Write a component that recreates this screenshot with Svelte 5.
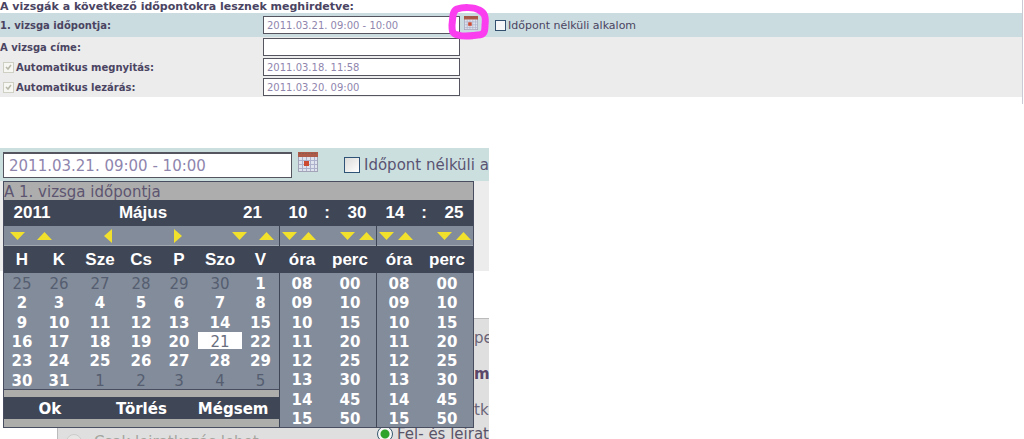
<script>
  const leading = [25, 26, 27, 28, 29, 30];
  const days = [
    ...leading.map((n) => ({ n, out: true })),
    ...Array.from({ length: 31 }, (_, i) => ({ n: i + 1, out: false })),
    ...[1, 2, 3, 4, 5].map((n) => ({ n, out: true })),
  ];
  const weeks = Array.from({ length: 6 }, (_, i) => days.slice(i * 7, i * 7 + 7));
  const weekdays = ['H', 'K', 'Sze', 'Cs', 'P', 'Szo', 'V'];
  const hours = ['08', '09', '10', '11', '12', '13', '14', '15'];
  const minutes = ['00', '10', '15', '20', '25', '30', '45', '50'];
  const times = [
    { id: 'start', h: '10', m: '30' },
    { id: 'end', h: '14', m: '25' },
  ];
  let selected = $state(21);
</script>

{#snippet arrow(dir, label)}
  <button type="button" class="arrow" aria-label={label}>
    {#if dir === 'down'}
      <svg width="15" height="8" viewBox="0 0 15 8"><path d="M0 0H15L7.5 8Z" /></svg>
    {:else if dir === 'up'}
      <svg width="15" height="8" viewBox="0 0 15 8"><path d="M0 8H15L7.5 0Z" /></svg>
    {:else if dir === 'left'}
      <svg width="8" height="14" viewBox="0 0 8 14"><path d="M8 0V14L0 7Z" /></svg>
    {:else}
      <svg width="8" height="14" viewBox="0 0 8 14"><path d="M0 0V14L8 7Z" /></svg>
    {/if}
  </button>
{/snippet}

{#snippet calendarIcon(size)}
  <svg width={size} height={size} viewBox="0 0 20 20">
    <rect x="0.5" y="0.5" width="19" height="19" fill="#dfe3ee" stroke="#a3a3b8" />
    <path d="M4.5 5V19M8.5 5V19M12.5 5V19M16.5 5V19M1 8.5H19M1 12.5H19M1 16.5H19" stroke="#adb1cb" fill="none" />
    <rect width="20" height="5" fill="#ad5a48" />
    <path d="M1 1.5H19" stroke="#8d5a50" stroke-dasharray="2 1" />
    <rect x="6" y="9" width="5" height="5" fill="#cc4a32" />
  </svg>
{/snippet}

<main>
  <form class="exam">
    <h1>A vizsgák a következő időpontokra lesznek meghirdetve:</h1>
    <div class="row teal">
      <label for="date">1. vizsga időpontja:</label>
      <input id="date" class="text" value="2011.03.21. 09:00 - 10:00" />
      <button type="button" class="pick" aria-label="Naptár">
        {@render calendarIcon(14)}
        <svg class="ring" width="42" height="36" viewBox="0 0 42 36">
          <path d="M9 5C15 3 26 3 31 6C37 9 38 13 37 21C37 28 36 31 30 31C23 32 16 33 10 31C4 30 4 27 4 21C5 14 4 7 9 5Z" />
        </svg>
      </button>
      <label class="check"><input type="checkbox" class="box" />Időpont nélküli alkalom</label>
    </div>
    <div class="row">
      <label for="title">A vizsga címe:</label>
      <input id="title" class="text" />
    </div>
    <div class="row">
      <label for="open" class="tick"><input type="checkbox" class="box dim" checked disabled aria-label="Automatikus megnyitás" />Automatikus megnyitás:</label>
      <input id="open" class="text" value="2011.03.18. 11:58" />
    </div>
    <div class="row">
      <label for="close" class="tick"><input type="checkbox" class="box dim" checked disabled aria-label="Automatikus lezárás" />Automatikus lezárás:</label>
      <input id="close" class="text" value="2011.03.20. 09:00" />
    </div>
  </form>

  <section class="detail">
    <div class="bar">
      <input class="text" aria-label="A 1. vizsga időpontja" value="2011.03.21. 09:00 - 10:00" />
      <button type="button" class="pick" aria-label="Naptár">{@render calendarIcon(20)}</button>
      <label class="check"><input type="checkbox" class="box" />Időpont nélküli alkalom</label>
    </div>
    <div class="blank"></div>
    <div class="options">
      <p>pe</p>
      <p class="strong">m</p>
      <p class="tall">tk</p>
      <div class="radios">
        <label class="off"><input type="radio" name="mode" disabled />Csak leiratkozás lehet</label>
        <label><input type="radio" name="mode" checked />Fel- és leirat</label>
      </div>
    </div>

    <div class="popup">
      <div class="caption">A 1. vizsga időpontja</div>
      <div class="panes">
        <div class="pane date">
          <div class="head split"><span>2011</span><span>Május</span><span>21</span></div>
          <div class="arrows split">
            <span>{@render arrow('down', 'Előző év')}{@render arrow('up', 'Következő év')}</span>
            <span class="wide">{@render arrow('left', 'Előző hónap')}{@render arrow('right', 'Következő hónap')}</span>
            <span>{@render arrow('down', 'Előző nap')}{@render arrow('up', 'Következő nap')}</span>
          </div>
          <table class="days">
            <colgroup><col class="c1" /><col class="c2" /><col class="c3" /><col class="c2" /><col class="c2" /><col class="c3" /><col /></colgroup>
            <thead><tr>{#each weekdays as d}<th>{d}</th>{/each}</tr></thead>
            <tbody>
              {#each weeks as week}
                <tr>
                  {#each week as d}
                    <td>
                      <button type="button" class:out={d.out} class:selected={!d.out && d.n === selected} onclick={() => { if (!d.out) selected = d.n; }}>{d.n}</button>
                    </td>
                  {/each}
                </tr>
              {/each}
            </tbody>
          </table>
          <div class="actions">
            <button type="button">Ok</button><button type="button">Törlés</button><button type="button">Mégsem</button>
          </div>
        </div>
        {#each times as t (t.id)}
          <div class="pane time">
            <div class="head clock"><span>{t.h}</span><span>:</span><span>{t.m}</span></div>
            <div class="arrows pairs">
              <span>{@render arrow('down', 'Óra le')}{@render arrow('up', 'Óra fel')}</span>
              <span>{@render arrow('down', 'Perc le')}{@render arrow('up', 'Perc fel')}</span>
            </div>
            <table class="hours">
              <colgroup><col class="hour" /><col /></colgroup>
              <thead><tr><th>óra</th><th>perc</th></tr></thead>
              <tbody>
                {#each hours as h, i}
                  <tr><td><button type="button">{h}</button></td><td><button type="button">{minutes[i]}</button></td></tr>
                {/each}
              </tbody>
            </table>
          </div>
        {/each}
      </div>
    </div>
  </section>
</main>

<style>
  :global(body) { background: #fff; }
  main {
    font-family: Verdana, 'DejaVu Sans', sans-serif;
    color: #4a4462;
  }
  input, button { font: inherit; color: inherit; margin: 0; box-sizing: border-box; }
  button { border: 0; padding: 0; background: none; cursor: pointer; }
  svg { display: block; }
  .text {
    flex: none;
    border: 1px solid #55555f;
    background: #fff;
    color: #8f86ae;
    border-radius: 0;
  }

  .exam {
    font-size: 10px;
    height: 104px;
    margin-right: 1px;
    border-right: 1px solid #c9cad4;
  }
  h1 { margin: 0; font-size: 11px; line-height: 13px; font-weight: bold; }
  .row {
    display: grid;
    grid-template-columns: 263px 197px 35px 1fr;
    align-items: center;
    height: 20px;
    background: #ececec;
    white-space: nowrap;
  }
  .row.teal { height: 24px; background: #cadce0; }
  .row > label { font-weight: bold; }
  .row .text { width: 100%; height: 18px; padding: 1px 3px 0; }
  .row .check { font-weight: normal; font-size: 11px; }
  .row .pick { position: relative; align-self: start; justify-self: start; margin: 3px 0 0 4px; }
  .ring { position: absolute; left: -16px; top: -12px; fill: none; stroke: #fb3df0; stroke-width: 7; stroke-linejoin: round; }
  .tick, .check { display: flex; align-items: center; gap: 2px; }
  .tick { padding-left: 3px; }
  .box {
    appearance: none;
    flex: none;
    width: 11px;
    height: 11px;
    border: 1px solid #33506e;
    background: #f4f6f8;
  }
  .box.dim {
    border-color: #cfcfc4;
    background: #f6f6f2 url("data:image/svg+xml,%3Csvg xmlns='http://www.w3.org/2000/svg' viewBox='0 0 9 9'%3E%3Cpath d='M2 4l2 2 3-4' fill='none' stroke='%23b9b9aa' stroke-width='1.5'/%3E%3C/svg%3E");
  }

  .detail {
    position: relative;
    width: 489px;
    max-width: 100%;
    height: 291px;
    margin-top: 44px;
    overflow: hidden;
    font-size: 15px;
    background: #fff;
  }
  .bar {
    display: flex;
    align-items: center;
    height: 33px;
    padding-left: 3px;
    background: #cbdfdf;
    white-space: nowrap;
  }
  .bar .text { width: 289px; height: 26px; padding: 2px 5px 0; border-width: 2px 1px 1px; }
  .bar .pick { margin: 0 26px 6px 6px; }
  .bar .check { gap: 4px; color: #5a5472; }
  .bar .box {
    width: 16px;
    height: 16px;
    border-color: #2f5377;
    background: linear-gradient(135deg, #dcdcda, #fff);
  }
  .blank { height: 90px; background: #ececec; }
  .options {
    margin: 47px 0 0 57px;
    height: 121px;
    background: #dfdfdf;
    border-top: 1px solid #bbb;
    border-left: 1px solid #bbb;
    box-sizing: border-box;
    white-space: nowrap;
  }
  .options p { margin: 0; padding-left: 416px; line-height: 38px; height: 36px; color: #6a6478; }
  .options .strong { font-weight: bold; height: 36px; color: #5a4668; }
  .options .tall { height: 34px; }
  .radios { display: grid; grid-template-columns: 311px 1fr; padding-left: 8px; line-height: 18px; }
  .radios label { display: flex; align-items: center; gap: 4px; height: 18px; color: #5a5468; }
  .radios .off { color: #a5a5a0; gap: 12px; padding-top: 8px; }
  .radios input {
    appearance: none;
    flex: none;
    width: 16px;
    height: 16px;
    border: 1px solid #37596e;
    border-radius: 50%;
    background: radial-gradient(circle, #2fa32c 0 4px, #f6f6f6 5px);
  }
  .radios .off input { border-color: #ccc; background: #e6e6e4; }

  .popup {
    position: absolute;
    left: 3px;
    top: 33px;
    width: 471px;
    box-sizing: border-box;
    border: 1px solid #484e60;
    background: #838c9b;
    color: #fff;
  }
  .caption { height: 18px; line-height: 20px; background: #adadad; color: #5d5570; }
  .panes { display: grid; grid-template-columns: 275px 97px 97px; }
  .time { border-left: 1px solid #3f4656; }
  .head {
    display: grid;
    align-items: center;
    height: 26px;
    background: #3f4656;
    font-family: 'Liberation Sans', Arial, sans-serif;
    font-size: 17px;
    font-weight: bold;
    text-align: center;
  }
  .split { grid-template-columns: 56px 166px 1fr; }
  .clock { grid-template-columns: 36px 22px 1fr; }
  .arrows { display: grid; height: 20px; align-items: center; box-sizing: border-box; border-bottom: 1px solid #a2a8b0; }
  .arrows span { display: flex; }
  .arrows .wide { justify-content: center; gap: 43px; }
  .pairs { display: flex; justify-content: space-between; }
  .arrow { display: grid; place-items: center; width: 27px; height: 16px; }
  .pairs .arrow { width: 19px; }
  .arrow path { fill: #f1e02c; }
  table { width: 100%; border-collapse: collapse; table-layout: fixed; }
  .days { height: 143px; }
  .hours { height: 181px; }
  .c1 { width: 36px; }
  .c2 { width: 38px; }
  .c3 { width: 44px; }
  .hour { width: 44px; }
  th {
    height: 27px;
    padding: 0;
    background: #3f4656;
    font: bold 17px/27px 'Liberation Sans', Arial, sans-serif;
  }
  td { padding: 0; text-align: center; }
  td button { display: block; width: 100%; height: 17px; line-height: 17px; padding-top: 2px; font-weight: bold; }
  td .out { font-weight: normal; color: #555e70; }
  td .selected { font-weight: normal; color: #6a7080; background: #fff; }
  .actions {
    display: grid;
    grid-template-columns: repeat(3, 1fr);
    border-top: 1px solid #484e60;
    background: #3f4656;
    box-shadow: inset 0 7px #adaeac, inset 0 -8px #adaeac;
    height: 37px;
    font-weight: bold;
  }
</style>
